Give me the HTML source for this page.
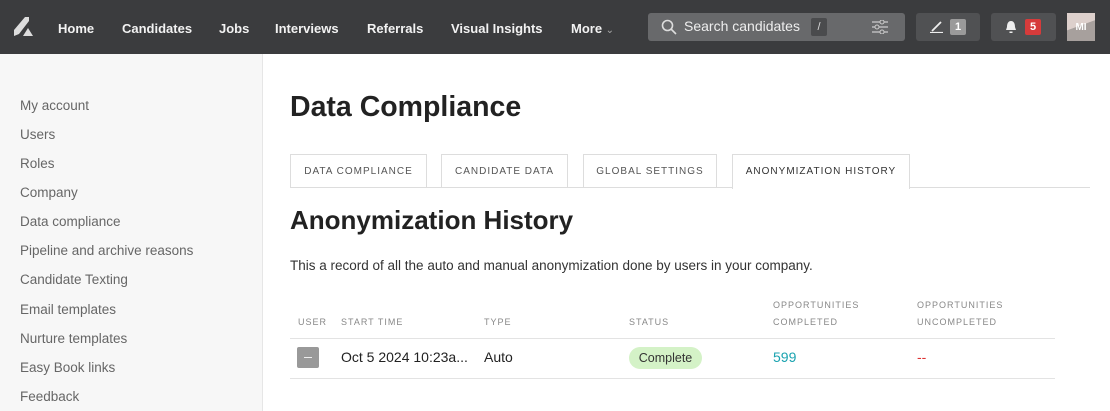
<!DOCTYPE html>
<html><head><style>
*{box-sizing:border-box;margin:0;padding:0}
body{width:1110px;height:411px;overflow:hidden;font-family:"Liberation Sans",sans-serif;background:#fff;color:#222;position:relative}
.top{position:absolute;left:0;top:0;width:1110px;height:54px;background:#3b3c3e}
.nav{position:absolute;top:21px;color:#f2f2f2;font-size:13px;font-weight:bold}
.side{position:absolute;left:0;top:54px;width:263px;height:357px;background:#f7f7f7;border-right:1px solid #e6e6e6}
.side div{position:absolute;left:20px;font-size:13.5px;color:#666}
.tab{position:absolute;top:154px;height:34px;border:1px solid #ddd;border-bottom:none;font-size:10px;letter-spacing:1px;color:#555;text-align:center;line-height:34px}
.th{position:absolute;font-size:9px;letter-spacing:1px;color:#888;line-height:17px}
.td{position:absolute;top:348px;font-size:14px;color:#222}
</style></head><body>
<div class="top">
<svg style="position:absolute;left:13px;top:16px" width="22" height="22" viewBox="0 0 22 22"><path d="M1 20 L1 14 L12 1 L16 1 L16 5 L6 18 Z" fill="#ddd"/><path d="M10 20 L15 12 L20 20 Z" fill="#ddd"/></svg>
<span class="nav" style="left:58px">Home</span>
<span class="nav" style="left:122px">Candidates</span>
<span class="nav" style="left:219px">Jobs</span>
<span class="nav" style="left:275px">Interviews</span>
<span class="nav" style="left:367px">Referrals</span>
<span class="nav" style="left:451px">Visual Insights</span>
<span class="nav" style="left:571px">More <span style="font-weight:normal;font-size:10px;color:#aaa">&#8964;</span></span>
<div style="position:absolute;left:648px;top:13px;width:257px;height:28px;background:#68696b;border-radius:3px">
<svg style="position:absolute;left:13px;top:6px" width="16" height="16" viewBox="0 0 16 16"><circle cx="6.5" cy="6.5" r="5" stroke="#ddd" stroke-width="1.6" fill="none"/><path d="M10 10 L15 15" stroke="#ddd" stroke-width="1.6"/></svg>
<span style="position:absolute;left:36px;top:5px;color:#eee;font-size:14px">Search candidates</span>
<span style="position:absolute;left:163px;top:5px;width:16px;height:18px;background:#4a4b4d;border-radius:2px;color:#ddd;font-size:11px;text-align:center;line-height:18px">/</span>
<svg style="position:absolute;left:224px;top:7px" width="16" height="14"><path d="M0 2H16M0 7H16M0 12H16" stroke="#ccc" stroke-width="1.2"/><circle cx="10" cy="2" r="2" fill="#68696b" stroke="#ccc"/><circle cx="5" cy="7" r="2" fill="#68696b" stroke="#ccc"/><circle cx="10" cy="12" r="2" fill="#68696b" stroke="#ccc"/></svg>
</div>
<div style="position:absolute;left:916px;top:13px;width:64px;height:28px;background:#505153;border-radius:3px">
<svg style="position:absolute;left:14px;top:8px" width="14" height="12"><path d="M2 10 L11 1" stroke="#eee" stroke-width="1.8"/><path d="M0 11.5H13" stroke="#eee" stroke-width="1.2"/></svg>
<span style="position:absolute;left:34px;top:6px;width:16px;height:16px;background:#9a9a9a;border-radius:2px;color:#fff;font-size:11px;font-weight:bold;text-align:center;line-height:16px">1</span></div>
<div style="position:absolute;left:991px;top:13px;width:65px;height:28px;background:#505153;border-radius:3px">
<svg style="position:absolute;left:14px;top:7px" width="12" height="14"><path d="M6 1C3 1 2 4 2 7L1 10H11L10 7C10 4 9 1 6 1Z M4.5 11.5H7.5V13H4.5Z" fill="#eee"/></svg>
<span style="position:absolute;left:34px;top:6px;width:16px;height:16px;background:#d63b3b;border-radius:2px;color:#fff;font-size:11px;font-weight:bold;text-align:center;line-height:16px">5</span></div>
<div style="position:absolute;left:1067px;top:13px;width:28px;height:28px;background:linear-gradient(160deg,#ddd0cc 45%,#a7a09d 46%);color:#fff;font-size:10px;font-weight:bold;text-align:center;line-height:30px">MI</div>
</div>
<div class="side">
<div style="top:44px">My account</div><div style="top:73px">Users</div><div style="top:102px">Roles</div><div style="top:131px">Company</div><div style="top:160px">Data compliance</div><div style="top:189px">Pipeline and archive reasons</div><div style="top:218px">Candidate Texting</div><div style="top:248px">Email templates</div><div style="top:277px">Nurture templates</div><div style="top:306px">Easy Book links</div><div style="top:335px">Feedback</div>
</div>
<div style="position:absolute;left:290px;top:91px;font-size:28.5px;font-weight:bold;color:#222">Data Compliance</div>
<div style="position:absolute;left:290px;top:187px;width:800px;border-top:1px solid #ddd"></div>
<div class="tab" style="left:290px;width:137px">DATA COMPLIANCE</div>
<div class="tab" style="left:441px;width:127px">CANDIDATE DATA</div>
<div class="tab" style="left:583px;width:134px">GLOBAL SETTINGS</div>
<div class="tab" style="left:732px;width:178px;height:35px;background:#fff;color:#333">ANONYMIZATION HISTORY</div>
<div style="position:absolute;left:290px;top:205px;font-size:26px;font-weight:bold;color:#222">Anonymization History</div>
<div style="position:absolute;left:290px;top:258px;font-size:13.5px;color:#333">This a record of all the auto and manual anonymization done by users in your company.</div>
<div class="th" style="left:298px;top:314px">USER</div>
<div class="th" style="left:341px;top:314px">START TIME</div>
<div class="th" style="left:484px;top:314px">TYPE</div>
<div class="th" style="left:629px;top:314px">STATUS</div>
<div class="th" style="left:773px;top:297px">OPPORTUNITIES<br>COMPLETED</div>
<div class="th" style="left:917px;top:297px">OPPORTUNITIES<br>UNCOMPLETED</div>
<div style="position:absolute;left:290px;top:338px;width:765px;border-top:1px solid #e3e3e3"></div>
<div style="position:absolute;left:290px;top:378px;width:765px;border-top:1px solid #e3e3e3"></div>
<div style="position:absolute;left:297px;top:347px;width:22px;height:21px;background:#999;border-radius:2px"><div style="position:absolute;left:7px;top:10px;width:8px;height:1px;background:#eee"></div></div>
<div class="td" style="left:341px;top:349px">Oct 5 2024 10:23a...</div>
<div class="td" style="left:484px;top:349px">Auto</div>
<div style="position:absolute;left:629px;top:347px;width:73px;height:22px;background:#d4f2c7;border-radius:11px;font-size:12.5px;color:#333;text-align:center;line-height:22px">Complete</div>
<div class="td" style="left:773px;top:349px;color:#1ba3b0">599</div>
<div class="td" style="left:917px;top:349px;color:#d33">--</div>
</body></html>
